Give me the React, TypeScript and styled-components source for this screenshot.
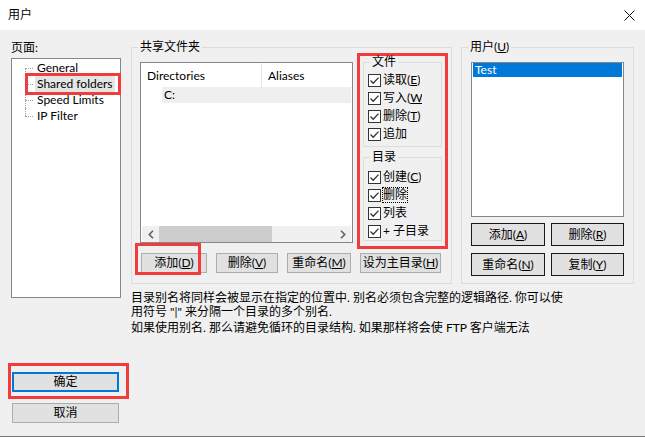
import styled, { createGlobalStyle } from "styled-components"

const GlobalStyle = createGlobalStyle`
  html, body {
    margin: 0;
    padding: 0;
  }
  body {
    width: 645px;
    height: 437px;
    overflow: hidden;
    background: #f0f0f0;
    color: #000;
    font-family: Lato, "Noto Sans CJK SC", sans-serif;
    font-size: 12px;
  }
  * {
    box-sizing: border-box;
  }
`

const red = "#f03c3c"

const Window = styled.div`
  width: 645px;
  height: 437px;
  display: flex;
  flex-direction: column;
`

const TitleBar = styled.div`
  height: 30px;
  background: #fff;
  display: flex;
  align-items: center;
  justify-content: space-between;
  padding: 0 10px 0 8px;
  line-height: 14px;
`

const Body = styled.div`
  flex: 1;
  display: flex;
  padding-left: 11px;
  border-bottom: 1px solid #777;
`

const LeftCol = styled.div`
  width: 110px;
  display: flex;
  flex-direction: column;
`

const PageLabel = styled.div`
  margin-top: 10px;
  height: 16px;
  line-height: 16px;
`

const Tree = styled.div`
  position: relative;
  margin-top: 2px;
  width: 110px;
  height: 240px;
  background: #fff;
  border: 1px solid #828790;
  padding: 1px 0 0 13px;
`

const TreeItem = styled.div<{ $pos: "first" | "mid" | "last"; $selected?: boolean }>`
  position: relative;
  height: 16px;
  display: flex;
  align-items: center;
  padding-left: 10px;

  &::before {
    content: "";
    position: absolute;
    left: 0;
    top: 8px;
    width: 8px;
    border-top: 1px dotted #a0a0a0;
  }
  &::after {
    content: "";
    position: absolute;
    left: 0;
    top: ${(p) => (p.$pos === "first" ? "8px" : "0")};
    height: ${(p) => (p.$pos === "mid" ? "16px" : "8px")};
    border-left: 1px dotted #a0a0a0;
  }

  span {
    padding: 0 2px;
    line-height: 16px;
    background: ${(p) => (p.$selected ? "#e5e5e5" : "transparent")};
  }
`

const Callout = styled.div<{ $t: number; $l: number; $w: number; $h: number }>`
  position: absolute;
  top: ${(p) => p.$t}px;
  left: ${(p) => p.$l}px;
  width: ${(p) => p.$w}px;
  height: ${(p) => p.$h}px;
  border: 3px solid ${red};
  pointer-events: none;
`

const Anchor = styled.div<{ $mt?: number; $ml?: number }>`
  position: relative;
  margin-top: ${(p) => p.$mt ?? 0}px;
  margin-left: ${(p) => p.$ml ?? 0}px;
`

const Button = styled.button<{ $w: number; $h?: number; $dark?: boolean; $default?: boolean }>`
  width: ${(p) => p.$w}px;
  height: ${(p) => p.$h ?? 20}px;
  padding: 0;
  margin: 0;
  background: #e1e1e1;
  border: ${(p) => (p.$default ? "2px solid #0078d7" : p.$dark ? "1px solid #1a1a1a" : "1px solid #adadad")};
  font: inherit;
  color: #000;
  line-height: 14px;
  white-space: nowrap;
  display: flex;
  align-items: center;
  justify-content: center;
`

const RightCol = styled.div`
  margin-left: 10px;
  width: 503px;
  display: flex;
  flex-direction: column;
`

const TopRow = styled.div`
  margin-top: 11px;
  display: flex;
  gap: 9px;
`

const Group = styled.fieldset<{ $w?: number; $h?: number }>`
  margin: 0;
  padding: 0;
  min-width: 0;
  width: ${(p) => (p.$w ? `${p.$w}px` : "auto")};
  height: ${(p) => (p.$h ? `${p.$h}px` : "auto")};
  border: 1px solid #dcdcdc;

  legend {
    margin-left: 6px;
    padding: 0 2px;
    line-height: 12px;
    font-size: 12px;
  }
`

const SharedBody = styled.div`
  display: flex;
  flex-direction: column;
  padding-left: 8px;
`

const SharedTop = styled.div`
  display: flex;
  align-items: flex-start;
  gap: 4px;
`

const ListView = styled.div`
  margin-top: 9px;
  width: 213px;
  height: 181px;
  background: #fff;
  border: 1px solid #828790;
  display: flex;
  flex-direction: column;
`

const ListHeader = styled.div`
  height: 24px;
  display: flex;
`

const HeaderCell = styled.div<{ $w?: number }>`
  width: ${(p) => (p.$w ? `${p.$w}px` : "auto")};
  flex: ${(p) => (p.$w ? "none" : "1")};
  padding-left: 6px;
  display: flex;
  align-items: center;
  border-right: ${(p) => (p.$w ? "1px solid #e5e5e5" : "none")};
`

const ListRow = styled.div`
  height: 16px;
  margin: 0 1px 0 21px;
  padding-left: 2px;
  background: #efefef;
  line-height: 16px;
`

const Spacer = styled.div`
  flex: 1;
`

const HScroll = styled.div`
  height: 16px;
  margin: 0 1px;
  background: #f0f0f0;
  display: flex;
  align-items: center;
`

const ScrollArrow = styled.div`
  width: 17px;
  height: 16px;
  display: flex;
  align-items: center;
  justify-content: center;
`

const ScrollTrack = styled.div`
  flex: 1;
  height: 16px;
`

const ScrollThumb = styled.div`
  width: 113px;
  height: 16px;
  background: #cdcdcd;
`

const PermBox = styled.div`
  width: 91px;
  border: 3px solid ${red};
  padding: 0 3px 5px 3px;
  display: flex;
  flex-direction: column;
  gap: 4px;
`

const PermRows = styled.div<{ $pt: number; $pb: number }>`
  padding: ${(p) => p.$pt}px 0 ${(p) => p.$pb}px 4px;
`

const CheckRow = styled.div`
  height: 18px;
  display: flex;
  align-items: center;
  gap: 2px;
`

const CheckLabel = styled.span<{ $focus?: boolean; $full?: boolean }>`
  max-width: ${(p) => (p.$full ? "none" : "39px")};
  overflow: hidden;
  white-space: nowrap;
  line-height: 14px;
  outline: ${(p) => (p.$focus ? "1px dotted #000" : "none")};
`

const ButtonRow = styled.div`
  margin-top: 4px;
  padding-left: 1px;
  display: flex;
  gap: 9px;
`

const UsersBody = styled.div`
  padding: 0 9px;
`

const UserList = styled.div`
  margin-top: 9px;
  height: 155px;
  background: #fff;
  border: 1px solid #828790;
  padding: 0 1px;
`

const UserRow = styled.div`
  height: 14px;
  line-height: 14px;
  padding-left: 2px;
  background: #0078d7;
  color: #fff;
`

const UserButtons = styled.div`
  margin-top: 6px;
  display: grid;
  grid-template-columns: 74px 73px;
  column-gap: 6px;
  row-gap: 7px;
`

const Note = styled.div`
  margin-top: 7px;
  line-height: 14px;
  white-space: nowrap;
`

const NoteGap = styled.div`
  height: 2px;
`

function CheckIcon() {
  return (
    <svg width="13" height="13" viewBox="0 0 13 13">
      <rect x="0.5" y="0.5" width="12" height="12" fill="#fff" stroke="#333" />
      <path d="M2.5 6.5 L5.2 9.2 L10.5 3.6" fill="none" stroke="#333" strokeWidth="1.3" />
    </svg>
  )
}

function Check({ children, focus, full }: { children: React.ReactNode; focus?: boolean; full?: boolean }) {
  return (
    <CheckRow>
      <CheckIcon />
      <CheckLabel $focus={focus} $full={full}>
        {children}
      </CheckLabel>
    </CheckRow>
  )
}

function Chevron({ dir }: { dir: "left" | "right" }) {
  return (
    <svg width="6" height="9" viewBox="0 0 6 9">
      <path
        d={dir === "left" ? "M5 0.8 L1.3 4.5 L5 8.2" : "M1 0.8 L4.7 4.5 L1 8.2"}
        fill="none"
        stroke="#606060"
        strokeWidth="1.6"
      />
    </svg>
  )
}

export default function App() {
  return (
    <>
      <GlobalStyle />
      <Window>
        <TitleBar>
          <span>用户</span>
          <svg width="11" height="11" viewBox="0 0 11 11">
            <path d="M0.5 0.5 L10.5 10.5 M10.5 0.5 L0.5 10.5" stroke="#111" strokeWidth="1" />
          </svg>
        </TitleBar>
        <Body>
          <LeftCol>
            <PageLabel>页面:</PageLabel>
            <Tree>
              <TreeItem $pos="first">
                <span>General</span>
              </TreeItem>
              <TreeItem $pos="mid" $selected>
                <span>Shared folders</span>
              </TreeItem>
              <TreeItem $pos="mid">
                <span>Speed Limits</span>
              </TreeItem>
              <TreeItem $pos="last">
                <span>IP Filter</span>
              </TreeItem>
              <Callout $t={14} $l={13} $w={96} $h={22} />
            </Tree>
            <Anchor $mt={74} $ml={1}>
              <Button $w={107} $default>
                确定
              </Button>
              <Callout $t={-9} $l={-4} $w={121} $h={36} />
            </Anchor>
            <Anchor $mt={11} $ml={1}>
              <Button $w={107}>取消</Button>
            </Anchor>
          </LeftCol>

          <RightCol>
            <TopRow>
              <Group $w={321} $h={243}>
                <legend>共享文件夹</legend>
                <SharedBody>
                  <SharedTop>
                    <ListView>
                      <ListHeader>
                        <HeaderCell $w={121}>Directories</HeaderCell>
                        <HeaderCell>Aliases</HeaderCell>
                      </ListHeader>
                      <ListRow>C:</ListRow>
                      <Spacer />
                      <HScroll>
                        <ScrollArrow>
                          <Chevron dir="left" />
                        </ScrollArrow>
                        <ScrollTrack>
                          <ScrollThumb />
                        </ScrollTrack>
                        <ScrollArrow>
                          <Chevron dir="right" />
                        </ScrollArrow>
                      </HScroll>
                    </ListView>
                    <PermBox>
                      <Group>
                        <legend>文件</legend>
                        <PermRows $pt={3} $pb={3}>
                          <Check>
                            读取(<u>E</u>)
                          </Check>
                          <Check>
                            写入(<u>W</u>)
                          </Check>
                          <Check>
                            删除(<u>T</u>)
                          </Check>
                          <Check>追加</Check>
                        </PermRows>
                      </Group>
                      <Group>
                        <legend>目录</legend>
                        <PermRows $pt={5} $pb={0}>
                          <Check>
                            创建(<u>C</u>)
                          </Check>
                          <Check focus>删除</Check>
                          <Check>列表</Check>
                          <Check full>+ 子目录</Check>
                        </PermRows>
                      </Group>
                    </PermBox>
                  </SharedTop>
                  <ButtonRow>
                    <Anchor>
                      <Button $w={66}>
                        添加(<u>D</u>)
                      </Button>
                      <Callout $t={-10} $l={-6} $w={66} $h={32} />
                    </Anchor>
                    <Button $w={62}>
                      删除(<u>V</u>)
                    </Button>
                    <Button $w={64}>
                      重命名(<u>M</u>)
                    </Button>
                    <Button $w={81}>
                      设为主目录(<u>H</u>)
                    </Button>
                  </ButtonRow>
                </SharedBody>
              </Group>

              <Group $w={173} $h={243}>
                <legend>
                  用户(<u>U</u>)
                </legend>
                <UsersBody>
                  <UserList>
                    <UserRow>Test</UserRow>
                  </UserList>
                  <UserButtons>
                    <Button $w={74} $h={23} $dark>
                      添加(<u>A</u>)
                    </Button>
                    <Button $w={73} $h={23} $dark>
                      删除(<u>R</u>)
                    </Button>
                    <Button $w={74} $h={23} $dark>
                      重命名(<u>N</u>)
                    </Button>
                    <Button $w={73} $h={23} $dark>
                      复制(<u>Y</u>)
                    </Button>
                  </UserButtons>
                </UsersBody>
              </Group>
            </TopRow>

            <Note>
              <div>目录别名将同样会被显示在指定的位置中. 别名必须包含完整的逻辑路径. 你可以使</div>
              <div>用符号 "|" 来分隔一个目录的多个别名.</div>
              <NoteGap />
              <div>如果使用别名. 那么请避免循环的目录结构. 如果那样将会使 FTP 客户端无法</div>
            </Note>
          </RightCol>
        </Body>
      </Window>
    </>
  )
}
